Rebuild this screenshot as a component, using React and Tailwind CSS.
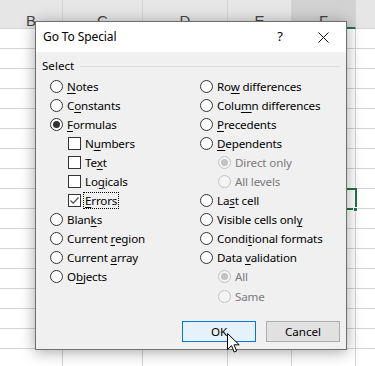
import React from 'react';

const FONT = { fontFamily: '"Noto Sans", "Open Sans", sans-serif' };

const columns = [
  { id: 'B', w: 'w-[63px]' },
  { id: 'C', w: 'w-[80px]' },
  { id: 'D', w: 'w-[85px]' },
  { id: 'E', w: 'w-[64px]' },
  { id: 'F', w: 'w-[64px]', selected: true },
  { id: '', w: 'w-[40px]' },
];

const rows = Array.from({ length: 17 }, (_, i) => i);

// label with one underlined mnemonic letter
const Label = ({ text, u }) => {
  if (u === undefined || u < 0) return <span>{text}</span>;
  return (
    <span>
      {text.slice(0, u)}
      <u className="underline underline-offset-[2px] decoration-1">{text[u]}</u>
      {text.slice(u + 1)}
    </span>
  );
};

const Radio = ({ checked, disabled }) => (
  <span
    className={`flex items-center justify-center w-[13px] h-[13px] rounded-full border shrink-0 ${
      disabled ? 'border-[#c2c2c2] bg-[#f4f4f4]' : 'border-[#333333] bg-white'
    }`}
  >
    {checked && (
      <span className={`w-[7px] h-[7px] rounded-full ${disabled ? 'bg-[#c2c2c2]' : 'bg-[#333333]'}`} />
    )}
  </span>
);

const Check = ({ checked }) => (
  <span className="flex items-center justify-center w-[13px] h-[13px] border border-[#333333] bg-white shrink-0">
    {checked && (
      <svg width="11" height="11" viewBox="0 0 11 11">
        <path d="M1.5 5.5 L4.2 8.2 L9.5 2.5" fill="none" stroke="#4a4a4a" strokeWidth="1.2" />
      </svg>
    )}
  </span>
);

const Row = ({ item }) => {
  const { text, u, type, checked, disabled, indent, focus } = item;
  return (
    <div className={`flex items-center h-[19.1px] gap-[4px] ${indent ? 'pl-[18px]' : ''}`}>
      {type === 'check' ? <Check checked={checked} /> : <Radio checked={checked} disabled={disabled} />}
      <span
        className={`text-[11.6px] tracking-[-0.15px] leading-[15px] whitespace-nowrap ${
          disabled ? 'text-[#7a7a7a]' : 'text-black'
        } ${focus ? 'border border-dotted border-black px-[1px] -ml-[2px]' : ''}`}
      >
        <Label text={text} u={disabled ? -1 : u} />
      </span>
    </div>
  );
};

const left = [
  { text: 'Notes', u: 0 },
  { text: 'Constants', u: 1 },
  { text: 'Formulas', u: 0, checked: true },
  { text: 'Numbers', u: 1, type: 'check', indent: true },
  { text: 'Text', u: 2, type: 'check', indent: true },
  { text: 'Logicals', u: 2, type: 'check', indent: true },
  { text: 'Errors', u: 0, type: 'check', indent: true, checked: true, focus: true },
  { text: 'Blanks', u: 4 },
  { text: 'Current region', u: 8 },
  { text: 'Current array', u: 8 },
  { text: 'Objects', u: 1 },
];

const right = [
  { text: 'Row differences', u: 2 },
  { text: 'Column differences', u: 4 },
  { text: 'Precedents', u: 0 },
  { text: 'Dependents', u: 0 },
  { text: 'Direct only', indent: true, disabled: true, checked: true },
  { text: 'All levels', indent: true, disabled: true },
  { text: 'Last cell', u: 2 },
  { text: 'Visible cells only', u: 17 },
  { text: 'Conditional formats', u: 5 },
  { text: 'Data validation', u: 5 },
  { text: 'All', indent: true, disabled: true, checked: true },
  { text: 'Same', indent: true, disabled: true },
];

export default function App() {
  return (
    <div className="relative w-[375px] h-[366px] overflow-hidden bg-white" style={FONT}>
      {/* spreadsheet */}
      <div className="flex h-[29px] bg-[#e6e6e6]">
        {columns.map((c, i) => (
          <div
            key={i}
            className={`${c.w} shrink-0 border-r border-[#d4d4d4] flex justify-center pt-[13px] text-[15px] leading-[15px] text-[#444] ${
              c.selected ? 'bg-[#d2d2d2] border-b-2 border-b-[#217346]' : 'border-b border-b-[#d4d4d4]'
            }`}
            style={{ fontFamily: '"Liberation Sans", sans-serif' }}
          >
            {c.id}
          </div>
        ))}
      </div>
      {rows.map(r => (
        <div key={r} className="flex h-[20px]">
          {columns.map((c, i) => (
            <div key={i} className={`${c.w} shrink-0 border-r border-b border-[#d4d4d4]`} />
          ))}
        </div>
      ))}

      {/* active cell */}
      <div className="absolute left-[292px] top-[188px] w-[65px] h-[22px] border-2 border-[#217346]" />
      <div className="absolute left-[353px] top-[207px] w-[5px] h-[5px] bg-[#217346] border border-white" />

      {/* dialog */}
      <div className="absolute left-[35px] top-[21px] w-[312px] h-[329px] border border-[#6f6f6f] bg-[#f0f0f0] flex flex-col shadow-[0_2px_14px_rgba(0,0,0,0.35)]">
        <div className="h-[30px] bg-white flex items-center pl-[7px] shrink-0">
          <span className="text-[12px] tracking-[-0.1px] text-black flex-1">Go To Special</span>
          <span className="text-[13px] text-black mr-[35px]">?</span>
          <svg width="11" height="11" viewBox="0 0 11 11" className="mr-[17px]">
            <path d="M0.5 0.5 L10.5 10.5 M10.5 0.5 L0.5 10.5" stroke="#111" strokeWidth="1" />
          </svg>
        </div>

        <div className="flex-1 flex flex-col pt-[7px] pl-[6px] pr-[6px] pb-[7px]">
          <div className="flex items-center h-[14px]">
            <span className="text-[11.6px] leading-[14px] text-black">Select</span>
            <span className="flex-1 ml-[6px] border-t border-[#dcdcdc]" />
          </div>
          <div className="flex mt-[3.5px] pl-[8px]">
            <div className="w-[150px] flex flex-col">
              {left.map(it => (
                <Row key={it.text} item={it} />
              ))}
            </div>
            <div className="flex flex-col">
              {right.map(it => (
                <Row key={it.text} item={it} />
              ))}
            </div>
          </div>
          <div className="mt-auto flex justify-end gap-[10px]">
            <button className="w-[74px] h-[21px] border border-[#0078d7] bg-[#e5f1fb] text-[11.6px] text-black leading-none">
              OK
            </button>
            <button className="w-[74px] h-[21px] border border-[#adadad] bg-[#e1e1e1] text-[11.6px] text-black leading-none">
              Cancel
            </button>
          </div>
        </div>
      </div>

      {/* mouse pointer */}
      <svg className="absolute left-[227px] top-[333px]" width="13" height="21" viewBox="0 0 13 21">
        <path
          d="M0.5 0.5 L0.5 16.5 L4.5 12.6 L7.2 19 L9.6 18 L7 11.8 L12.2 11.8 Z"
          fill="white"
          stroke="black"
          strokeWidth="1"
          strokeLinejoin="round"
        />
      </svg>
    </div>
  );
}
